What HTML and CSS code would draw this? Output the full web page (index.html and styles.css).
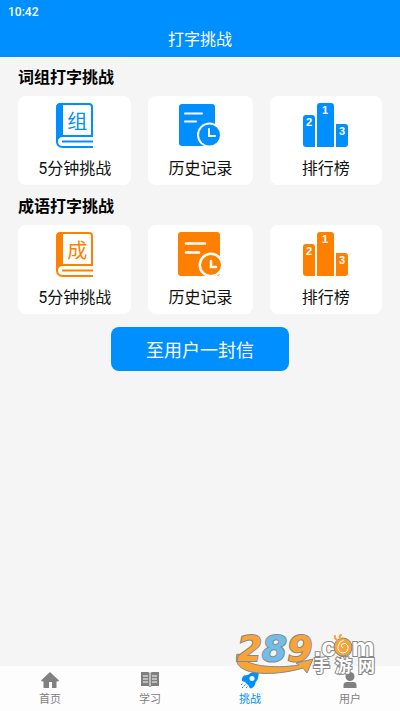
FILE: index.html
```html
<!DOCTYPE html>
<html lang="zh-CN">
<head>
<meta charset="utf-8">
<meta name="viewport" content="width=device-width, initial-scale=1">
<title>打字挑战</title>
<link rel="stylesheet" href="styles.css">
</head>
<body>
<svg class="defs" aria-hidden="true">
  <symbol id="book" viewBox="0 0 40 48">
    <path d="M37 34V5Q37 2 34 2H6Q2 2 2 6V40" fill="none" stroke="currentColor" stroke-width="2"/>
    <path d="M1 40V6Q1 1 6 1H8V34Q3 34 1 40Z" fill="currentColor"/>
    <path d="M38 34H8Q2 34 2 39.500T8 45H38M7 39.500H38" fill="none" stroke="currentColor" stroke-width="2"/>
  </symbol>
  <symbol id="record" viewBox="0 0 44 48">
    <rect x="1" y="2" width="36" height="42" rx="3" fill="currentColor"/>
    <path d="M7 11.500H24M7 19.500H18" stroke="#fff" stroke-width="2" stroke-linecap="round"/>
    <circle cx="31.500" cy="33" r="12.500" fill="#fff"/>
    <circle cx="31.500" cy="33" r="10.500" fill="currentColor"/>
    <path d="M31 27V34H37" fill="none" stroke="#fff" stroke-width="2" stroke-linecap="round"/>
  </symbol>
  <symbol id="record-large" viewBox="0 0 46 48">
    <rect x="1" y="1" width="42" height="44" rx="3" fill="currentColor"/>
    <path d="M9 12.500H28M9 21.500H22" stroke="#fff" stroke-width="2.500" stroke-linecap="round"/>
    <circle cx="34" cy="34" r="12.500" fill="#fff"/>
    <circle cx="34" cy="34" r="10" fill="currentColor"/>
    <path d="M34 30V36H39" fill="none" stroke="#fff" stroke-width="2.500" stroke-linecap="round"/>
  </symbol>
</svg>
<header class="top">
  <time class="clock">10:42</time>
  <h1 class="title">打字挑战</h1>
</header>
<main class="content">
  <section class="group blue">
    <h2 class="heading">词组打字挑战</h2>
    <div class="cards">
      <button class="card" type="button"><span class="book"><svg class="icon"><use href="#book"/></svg><span class="glyph">组</span></span><span>5分钟挑战</span></button>
      <button class="card" type="button"><svg class="icon"><use href="#record"/></svg><span>历史记录</span></button>
      <button class="card" type="button">
        <svg class="icon" viewBox="0 0 46 48">
          <path d="M12 45H3Q0 45 0 42V16Q0 13 3 13H9Q12 13 12 16ZM31 45H14V4Q14 1 17 1H28Q31 1 31 4ZM33 45V22H42Q45 22 45 25V42Q45 45 42 45Z" fill="currentColor"/>
          <g class="ranks"><text x="6" y="24">2</text><text x="22" y="12">1</text><text x="39" y="33">3</text></g>
        </svg><span>排行榜</span></button>
    </div>
  </section>
  <section class="group orange">
    <h2 class="heading">成语打字挑战</h2>
    <div class="cards">
      <button class="card" type="button"><span class="book"><svg class="icon"><use href="#book"/></svg><span class="glyph">成</span></span><span>5分钟挑战</span></button>
      <button class="card" type="button"><svg class="icon"><use href="#record-large"/></svg><span>历史记录</span></button>
      <button class="card" type="button">
        <svg class="icon" viewBox="0 0 46 48">
          <path d="M12 45H3Q0 45 0 42V16Q0 13 3 13H9Q12 13 12 16ZM31 45H14V4Q14 1 17 1H28Q31 1 31 4ZM33 45V22H42Q45 22 45 25V42Q45 45 42 45Z" fill="currentColor"/>
          <g class="ranks"><text x="6" y="24">2</text><text x="22" y="12">1</text><text x="39" y="33">3</text></g>
        </svg><span>排行榜</span></button>
    </div>
  </section>
  <button class="letter" type="button">至用户一封信</button>
</main>
<nav class="tabs">
  <a class="tab" href="#home"><svg class="tab-icon" viewBox="0 0 20 20"><path d="M10 1L19 9.500L18 10.500H16.500V17H12V11H9V17H3.500V10.500H2L1 9.500Z" fill="currentColor"/></svg>首页</a>
  <a class="tab" href="#study"><svg class="tab-icon" viewBox="0 0 20 20"><path d="M1 1H8L10 2L12 1H19V15H12L10 16L8 15H1Z" fill="currentColor"/><path d="M10 2V15M3 5H8M3 8H8M3 11H8M12 5H17M12 8H17M12 11H17" stroke="#fdfdfd"/></svg>学习</a>
  <a class="tab active" href="#challenge"><svg class="tab-icon" viewBox="0 0 20 20"><path d="M18.500 1Q12 0 8 4L4 4.500Q1 7 2 10L5 11L9 15Q9 17 11 17.500Q15 16 15.500 11.500Q19.500 7 18.500 1Z" fill="currentColor"/><circle cx="12" cy="7.500" r="2.500" fill="#fdfdfd"/><path d="M1 14L3 12M2 17L6 13M6 17L8 15" stroke="currentColor" stroke-dasharray="2 1"/></svg>挑战</a>
  <a class="tab" href="#user"><svg class="tab-icon" viewBox="0 0 20 20"><circle cx="10" cy="5.500" r="4.500" fill="currentColor"/><path d="M3.500 17V14Q3.500 11 7 11H13Q16.500 11 16.500 14V17Z" fill="currentColor"/></svg>用户</a>
</nav>
<svg class="mark" viewBox="0 0 144 48" role="img" aria-label="289.com 手游网">
  <path d="M3 26C-4 50 44 48 69 40L73 45L79 31L62 35L65 37C40 41 9 38 8 27Z" fill="#f8a436" stroke="#888"/>
  <text class="digits" x="3" y="33">2<tspan class="sky">8</tspan>9</text>
  <text class="domain" x="80" y="28">.com</text>
  <text class="site" x="79 101 124" y="44">手游网</text>
  <circle cx="109" cy="19" r="9" fill="#f8a436" stroke="#888"/>
  <path d="M109 20Q106 18 108 16Q112 14 114 18Q115 24 109 25Q103 24 104 18Q105 13 110 12" fill="none" stroke="#fff"/>
  <path d="M103 12Q100 10 101 8M106 10Q105 8 107 7" fill="none" stroke="#f8a436" stroke-width="2" stroke-linecap="round"/>
</svg>
</body>
</html>
```
FILE: styles.css
```css
* { box-sizing: border-box; }
body {
  margin: 0;
  min-height: 100vh;
  display: flex;
  flex-direction: column;
  background: #f5f5f5;
  color: #111;
  font-family: Roboto, "Noto Sans CJK SC", sans-serif;
  font-size: 16px;
}
button { border: 0; font: inherit; color: inherit; }
.defs { position: absolute; width: 0; height: 0; }
.top { background: #008fff; color: #fff; }
.clock { display: block; padding: 4px 8px 0; font-size: 12px; line-height: 16px; font-weight: 500; }
.title { margin: 0; padding: 10px 0 7px; text-align: center; font-size: 16px; line-height: 20px; font-weight: 400; }
.content { flex: 1; padding: 9px 18px; display: flex; flex-direction: column; }
.blue { --accent: #008fff; }
.orange { --accent: #ff8000; }
.heading { margin: 0; padding: 0 0 6px; font-size: 16px; line-height: 24px; font-weight: 700; color: #000; }
.cards { display: grid; grid-template-columns: 113fr 104fr 112fr; gap: 17px; }
.card {
  display: flex; flex-direction: column; align-items: center; gap: 8px;
  padding: 6px 0 5px; border-radius: 8px; background: #fff; line-height: 22px;
}
.icon { display: block; width: 46px; height: 48px; color: var(--accent); }
.book { position: relative; }
.glyph { position: absolute; left: 5px; right: 0; top: 8px; text-align: center; font-size: 20px; line-height: 24px; color: var(--accent); }
.ranks { fill: #fff; font: 700 11px "Liberation Sans", sans-serif; text-anchor: middle; }
.group { padding-bottom: 10px; }
.letter {
  align-self: center; width: 49%; margin-top: 3px; padding: 12px 0 8px;
  border-radius: 8px; background: #008fff; color: #fff; font-size: 18px; line-height: 24px;
}
.tabs { display: flex; padding: 5px 0 3px; background: #fdfdfd; }
.tab {
  flex: 1; display: flex; flex-direction: column; align-items: center; gap: 1px;
  color: #808080; font-size: 11px; line-height: 16px; text-decoration: none;
}
.tab-icon { width: 20px; height: 20px; }
.active { color: #008fff; }
.mark { position: absolute; right: 22px; bottom: 35px; width: 144px; height: 48px; overflow: visible; pointer-events: none; }
.digits, .domain, .site { stroke: #888; stroke-width: 2px; paint-order: stroke; font-weight: 700; fill: #fff; }
.digits { font-family: "DejaVu Sans", sans-serif; font-size: 36px; font-style: italic; fill: #f8a436; }
.sky { fill: #70bde8; }
.domain { font-family: "Liberation Sans", sans-serif; font-size: 26px; }
.site { font-family: "Noto Sans CJK SC", sans-serif; font-size: 17px; }
```
